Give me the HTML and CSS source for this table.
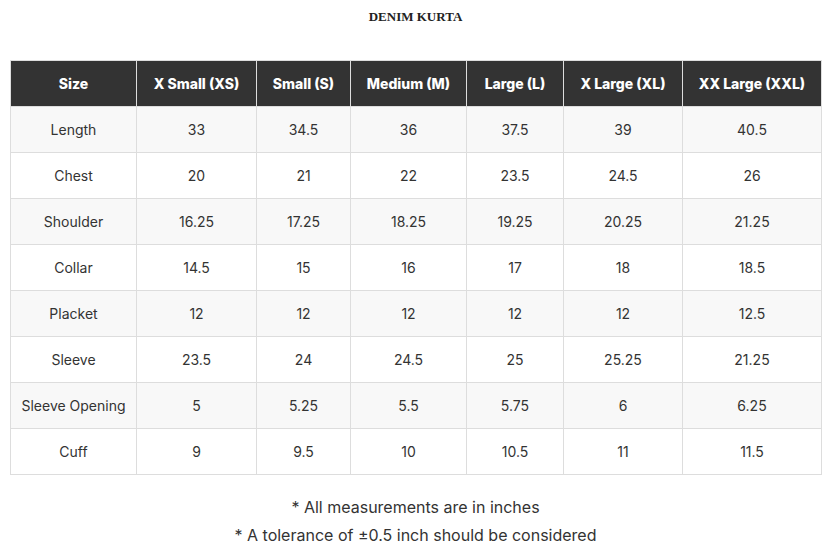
FILE: index.html
```html
<!DOCTYPE html>
<html>
<head>
<meta charset="utf-8">
<link rel="stylesheet" href="styles.css">
</head>
<body>
<h1 class="title">DENIM KURTA</h1>
<table class="size-table">
<colgroup>
<col style="width:126px"><col style="width:120px"><col style="width:94px"><col style="width:116px"><col style="width:97px"><col style="width:119px"><col style="width:139px">
</colgroup>
<thead>
<tr><th>Size</th><th>X Small (XS)</th><th>Small (S)</th><th>Medium (M)</th><th>Large (L)</th><th>X Large (XL)</th><th>XX Large (XXL)</th></tr>
</thead>
<tbody>
<tr><td>Length</td><td>33</td><td>34.5</td><td>36</td><td>37.5</td><td>39</td><td>40.5</td></tr>
<tr><td>Chest</td><td>20</td><td>21</td><td>22</td><td>23.5</td><td>24.5</td><td>26</td></tr>
<tr><td>Shoulder</td><td>16.25</td><td>17.25</td><td>18.25</td><td>19.25</td><td>20.25</td><td>21.25</td></tr>
<tr><td>Collar</td><td>14.5</td><td>15</td><td>16</td><td>17</td><td>18</td><td>18.5</td></tr>
<tr><td>Placket</td><td>12</td><td>12</td><td>12</td><td>12</td><td>12</td><td>12.5</td></tr>
<tr><td>Sleeve</td><td>23.5</td><td>24</td><td>24.5</td><td>25</td><td>25.25</td><td>21.25</td></tr>
<tr><td>Sleeve Opening</td><td>5</td><td>5.25</td><td>5.5</td><td>5.75</td><td>6</td><td>6.25</td></tr>
<tr><td>Cuff</td><td>9</td><td>9.5</td><td>10</td><td>10.5</td><td>11</td><td>11.5</td></tr>
</tbody>
</table>
<div class="notes">
<p>* All measurements are in inches</p>
<p>* A tolerance of ±0.5 inch should be considered</p>
</div>
</body>
</html>
```
FILE: styles.css
```css
html, body {
  margin: 0;
  padding: 0;
  background: #fff;
}
body {
  padding: 0 4px 0 10px;
  font-family: Inter, Roboto, "Liberation Sans", sans-serif;
  color: #333;
}
.title {
  margin: 0;
  padding-top: 9px;
  height: 60px;
  box-sizing: border-box;
  text-align: center;
  font-family: "Liberation Serif", serif;
  font-weight: bold;
  font-size: 13px;
  line-height: 15px;
  color: #222;
}
.size-table {
  width: 811px;
  table-layout: fixed;
  border-collapse: collapse;
  border: 1px solid #ddd;
}
.size-table th,
.size-table td {
  border: 1px solid #ddd;
  padding: 0 4px;
  text-align: center;
  vertical-align: middle;
  font-size: 14px;
  box-sizing: border-box;
}
.size-table th {
  background: #333;
  color: #fff;
  font-weight: 800;
  height: 46px;
}
.size-table td {
  color: #333;
  height: 46px;
}
.size-table tbody tr:nth-child(odd) td {
  background: #f8f8f8;
}
.notes {
  margin-top: 18px;
  text-align: center;
  font-size: 16px;
  color: #333;
}
.notes p {
  margin: 0;
  line-height: 28px;
}
```
